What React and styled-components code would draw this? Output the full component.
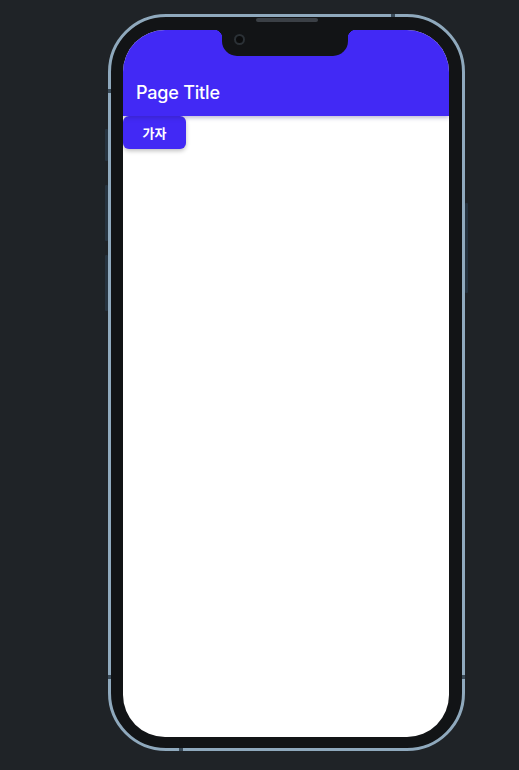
import styled, { createGlobalStyle } from 'styled-components';

const GlobalStyle = createGlobalStyle`
  html, body {
    margin: 0;
    padding: 0;
    background: #1f2327;
  }
  body {
    font-family: 'Inter', 'Noto Sans CJK KR', sans-serif;
  }
`;

const Stage = styled.div`
  width: 519px;
  height: 770px;
  padding: 14px 0 0 108px;
  box-sizing: border-box;
  background: #1f2327;
`;

const Phone = styled.div`
  position: relative;
  width: 357px;
  height: 737px;
  box-sizing: border-box;
  border: 3px solid #8fa9bd;
  border-radius: 58px;
  background: #121416;
  padding: 13px 13px 11px 12px;
`;

const SideButton = styled.span`
  position: absolute;
  width: 3px;
  border-radius: 1px;
  background: #26333f;
  top: ${(p) => p.top}px;
  height: ${(p) => p.h}px;
  ${(p) => (p.right ? 'right: -6px;' : 'left: -6px;')}
`;

const Band = styled.span`
  position: absolute;
  background: #3a4b59;
  ${(p) => p.pos}
`;

const Speaker = styled.span`
  position: absolute;
  top: 1px;
  left: 145px;
  width: 62px;
  height: 4px;
  border-radius: 2px;
  background: #3b4046;
`;

const Screen = styled.div`
  position: relative;
  height: 100%;
  border-radius: 42px;
  overflow: hidden;
  background: #ffffff;
`;

const Notch = styled.div`
  position: absolute;
  top: 0;
  left: 99px;
  width: 126px;
  height: 26px;
  background: #121416;
  border-radius: 0 0 15px 15px;
  z-index: 2;
  &::before,
  &::after {
    content: '';
    position: absolute;
    top: 0;
    width: 8px;
    height: 8px;
  }
  &::before {
    left: -8px;
    background: radial-gradient(circle at 0 100%, transparent 8px, #121416 8.5px);
  }
  &::after {
    right: -8px;
    background: radial-gradient(circle at 100% 100%, transparent 8px, #121416 8.5px);
  }
`;

const Camera = styled.span`
  position: absolute;
  top: 4px;
  left: 12px;
  width: 7px;
  height: 7px;
  border-radius: 50%;
  border: 2px solid #2b3136;
  background: #0b0c0d;
`;

const AppBar = styled.header`
  height: 86px;
  background: #4229f5;
  display: flex;
  align-items: flex-end;
  padding: 0 13px 13px;
  box-sizing: border-box;
  box-shadow: 0 2px 4px rgba(40, 30, 120, 0.3);
  position: relative;
  z-index: 1;
`;

const Title = styled.h1`
  margin: 0;
  font-family: 'Inter', sans-serif;
  font-weight: 500;
  font-size: 18px;
  letter-spacing: -0.2px;
  color: #ffffff;
`;

const Body = styled.main`
  display: flex;
  flex-direction: column;
  align-items: flex-start;
`;

const GoButton = styled.button`
  width: 63px;
  height: 33px;
  border: none;
  border-radius: 6px;
  background: #4229f5;
  color: #ffffff;
  font-family: 'Noto Sans CJK KR', sans-serif;
  font-weight: 700;
  font-size: 13px;
  cursor: pointer;
  box-shadow: 0 2px 4px rgba(0, 0, 0, 0.25);
`;

export default function App() {
  return (
    <>
      <GlobalStyle />
      <Stage>
        <Phone>
          <Speaker />
          <SideButton top={112} h={32} />
          <SideButton top={168} h={56} />
          <SideButton top={238} h={56} />
          <SideButton right top={186} h={90} />
          <Band pos="left: -3px; top: 72px; width: 3px; height: 4px;" />
          <Band pos="left: -3px; top: 658px; width: 3px; height: 4px;" />
          <Band pos="right: -3px; top: 658px; width: 3px; height: 4px;" />
          <Band pos="top: -3px; left: 280px; width: 4px; height: 3px;" />
          <Band pos="bottom: -3px; left: 68px; width: 4px; height: 3px;" />
          <Screen>
            <Notch>
              <Camera />
            </Notch>
            <AppBar>
              <Title>Page Title</Title>
            </AppBar>
            <Body>
              <GoButton>가자</GoButton>
            </Body>
          </Screen>
        </Phone>
      </Stage>
    </>
  );
}
